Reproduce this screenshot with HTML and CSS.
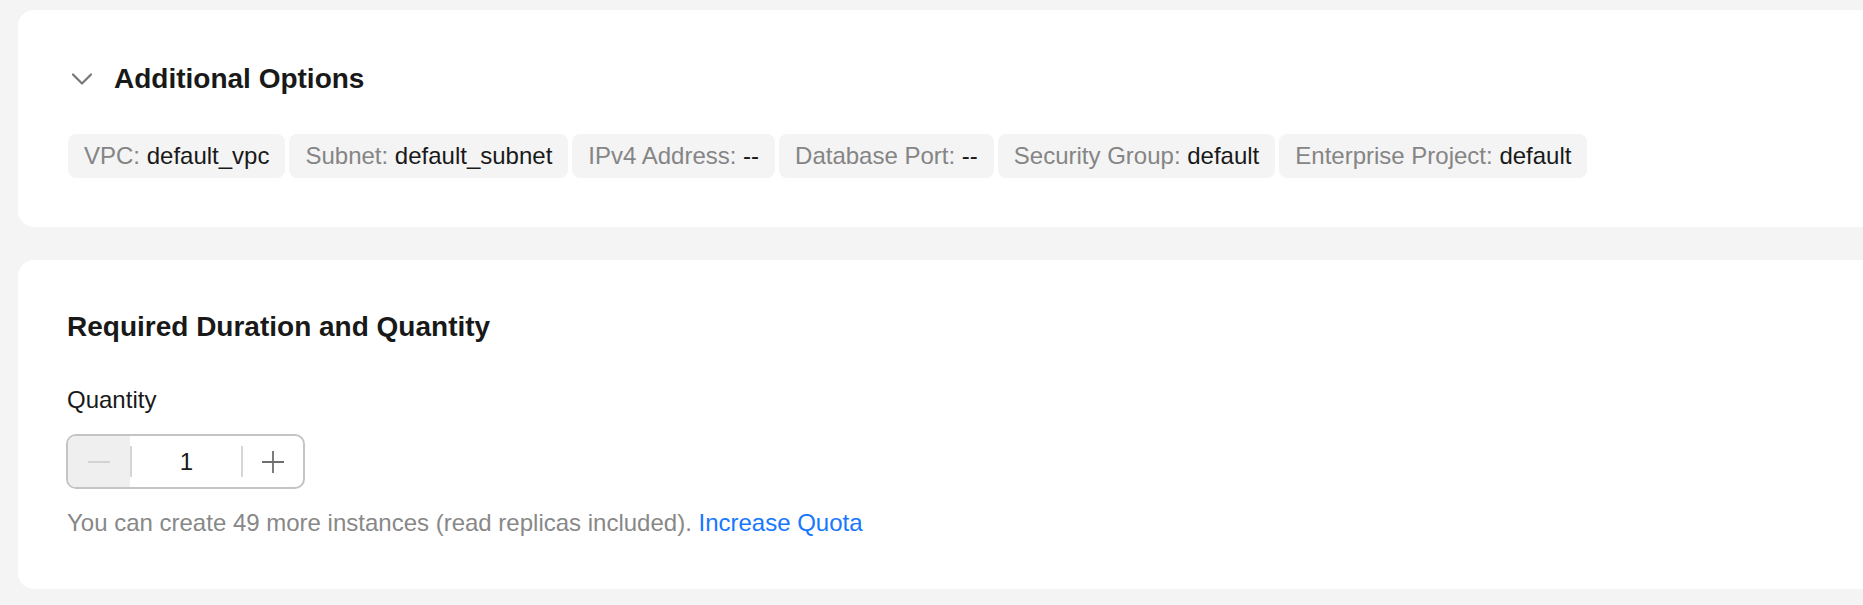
FILE: index.html
```html
<!DOCTYPE html>
<html lang="en">
<head>
<meta charset="utf-8">
<title>Options</title>
<link rel="stylesheet" href="styles.css">
</head>
<body>
<div class="page">
  <section class="card card-options">
    <div class="options-head">
      <svg class="chevron" width="28" height="28" viewBox="0 0 28 28" aria-hidden="true">
        <path d="M5 9.5 L14 18.5 L23 9.5" fill="none" stroke="#777777" stroke-width="2.2" stroke-linecap="round" stroke-linejoin="round"/>
      </svg>
      <h2 class="title">Additional Options</h2>
    </div>
    <div class="tags">
      <span class="tag"><span class="tag-label">VPC: </span><span class="tag-value">default_vpc</span></span>
      <span class="tag"><span class="tag-label">Subnet: </span><span class="tag-value">default_subnet</span></span>
      <span class="tag"><span class="tag-label">IPv4 Address: </span><span class="tag-value">--</span></span>
      <span class="tag"><span class="tag-label">Database Port: </span><span class="tag-value">--</span></span>
      <span class="tag"><span class="tag-label">Security Group: </span><span class="tag-value">default</span></span>
      <span class="tag"><span class="tag-label">Enterprise Project: </span><span class="tag-value">default</span></span>
    </div>
  </section>

  <section class="card card-quantity">
    <h2 class="title">Required Duration and Quantity</h2>
    <div class="field-label">Quantity</div>
    <div class="stepper">
      <div class="step-btn step-minus">
        <svg width="24" height="24" viewBox="0 0 24 24" aria-hidden="true"><path d="M1 12 H23" stroke="#c9c9c9" stroke-width="1.5"/></svg>
      </div>
      <span class="step-sep"></span>
      <div class="step-value">1</div>
      <span class="step-sep"></span>
      <div class="step-btn step-plus">
        <svg width="24" height="24" viewBox="0 0 24 24" aria-hidden="true"><path d="M1 12 H23 M12 1 V23" stroke="#6e6e6e" stroke-width="1.8"/></svg>
      </div>
    </div>
    <p class="hint">You can create 49 more instances (read replicas included). <a class="link" href="#">Increase Quota</a></p>
  </section>
</div>
</body>
</html>
```
FILE: styles.css
```css
html, body {
  margin: 0;
  padding: 0;
}
body {
  background: #f4f4f4;
  font-family: "Liberation Sans", Arial, sans-serif;
  color: #191919;
  overflow: hidden;
}
.page {
  display: flex;
  flex-direction: column;
  gap: 33px;
  padding: 10px 0 0 18px;
}
.card {
  background: #ffffff;
  border-radius: 16px 0 0 16px;
  margin-right: -20px;
}
.card-options {
  height: 217px;
  box-sizing: border-box;
  padding: 50px 0 0 50px;
}
.options-head {
  display: flex;
  align-items: center;
  gap: 18px;
  height: 36px;
  margin-top: 1px;
}
.chevron {
  display: block;
  flex: none;
}
.title {
  margin: 0;
  font-size: 28px;
  line-height: 36px;
  font-weight: 700;
  color: #191919;
}
.tags {
  display: flex;
  gap: 4px;
  margin-top: 37px;
}
.tag {
  background: #f4f4f4;
  border-radius: 8px;
  height: 44px;
  padding: 0 16px;
  display: flex;
  align-items: center;
  font-size: 24px;
  white-space: pre;
}
.tag-label {
  color: #858585;
}
.tag-value {
  color: #191919;
}
.card-quantity {
  height: 329px;
  box-sizing: border-box;
  padding: 49px 0 0 49px;
}
.field-label {
  margin-top: 39px;
  font-size: 24px;
  line-height: 32px;
  color: #191919;
}
.stepper {
  margin-top: 18px;
  width: 239px;
  height: 55px;
  box-sizing: border-box;
  border: 2px solid #c4c4c4;
  border-radius: 10px;
  display: flex;
  align-items: center;
  overflow: hidden;
  margin-left: -1px;
}
.step-btn {
  height: 100%;
  display: flex;
  align-items: center;
  justify-content: center;
}
.step-btn svg {
  display: block;
}
.step-minus {
  width: 62px;
  background: #efefef;
}
.step-plus {
  width: 60px;
}
.step-sep {
  width: 2px;
  height: 31px;
  background: #d6d6d6;
  flex: none;
}
.step-value {
  flex: 1;
  text-align: center;
  font-size: 24px;
  line-height: 32px;
  color: #191919;
}
.hint {
  margin: 18px 0 0;
  font-size: 24px;
  line-height: 32px;
  color: #888888;
}
.link {
  color: #1677ff;
  text-decoration: none;
}
```
